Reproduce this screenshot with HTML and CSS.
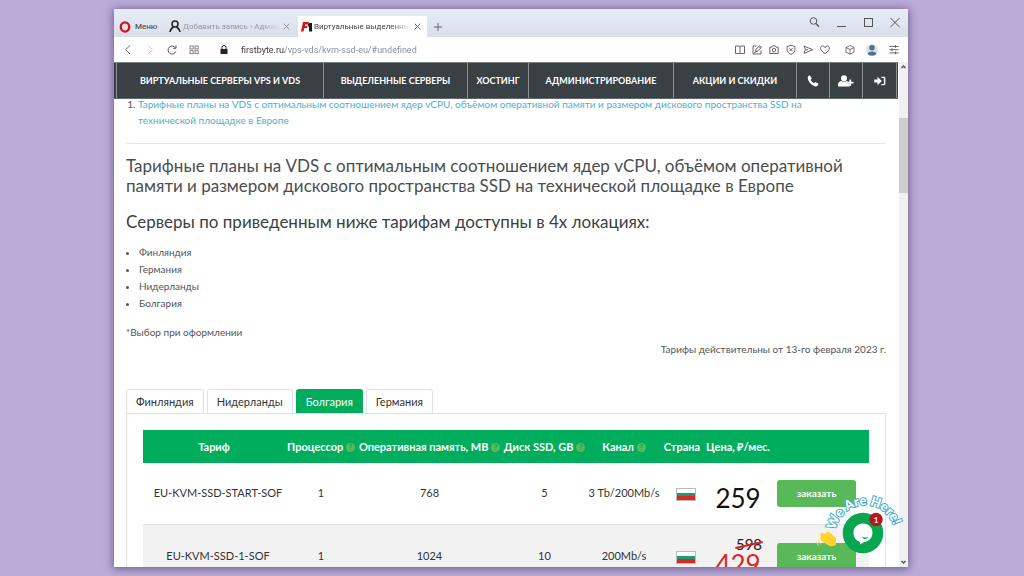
FILE: index.html
```html
<!DOCTYPE html>
<html lang="ru">
<head>
<meta charset="utf-8">
<title>Виртуальные выделенные серверы</title>
<link rel="stylesheet" href="styles.css">
</head>
<body>
<div class="window">
  <header class="tabstrip">
    <button class="menu" type="button">
      <svg class="ico-opera" viewBox="0 0 12 12"><ellipse cx="6" cy="6" rx="4.2" ry="4.6" fill="none" stroke="#d8131f" stroke-width="2.4"/></svg>
      Меню
    </button>
    <div class="btab">
      <svg class="ico-user" viewBox="0 0 12 13" fill="none" stroke="#222" stroke-width="1.5"><circle cx="6" cy="4" r="3"/><path d="M1 12c.3-2.500 1.800-4 3.500-5M11 12c-.3-2.500-1.800-4-3.500-5"/></svg>
      <span class="btab-title">Добавить запись ‹ Админи</span>
      <button class="x" type="button" aria-label="Закрыть вкладку"><svg viewBox="0 0 8 8" fill="none" stroke="#888f99"><path d="M.7.7l6.600 6.600M7.300.7L.7 7.300"/></svg></button>
    </div>
    <div class="btab active">
      <svg class="ico-fb" viewBox="0 0 12 10"><path d="M2 0h6L7.300 2.500H4.200l-.3 1.400h2.600L6 6.100H3.400L2.500 9.500H0z" fill="#d3141d"/><path d="M8.200 1H11v8.500H8V4.300l-1.300.5.3-2.300z" fill="#181818"/></svg>
      <span class="btab-title">Виртуальные выделенные</span>
      <button class="x" type="button" aria-label="Закрыть вкладку"><svg viewBox="0 0 8 8" fill="none" stroke="#555"><path d="M.7.7l6.600 6.600M7.300.7L.7 7.300"/></svg></button>
    </div>
    <button class="plus" type="button" aria-label="Новая вкладка"><svg viewBox="0 0 8 8" fill="none" stroke="#5c6470"><path d="M4 0v8M0 4h8"/></svg></button>
    <div class="wincontrols">
      <button type="button" aria-label="Поиск"><svg viewBox="0 0 12 12" fill="none" stroke="#555"><circle cx="5.500" cy="5" r="3.300"/><path d="M8 7.500l3 3.300" stroke-width="1.300"/></svg></button>
      <button type="button" aria-label="Свернуть"><svg viewBox="0 0 12 12" fill="none" stroke="#555"><path d="M2 10.500h9"/></svg></button>
      <button type="button" aria-label="Развернуть"><svg viewBox="0 0 12 12" fill="none" stroke="#555"><rect x="2.500" y="2.500" width="8" height="8"/></svg></button>
      <button type="button" aria-label="Закрыть"><svg viewBox="0 0 12 12" fill="none" stroke="#555"><path d="M1.500 2l9 9M10.500 2l-9 9"/></svg></button>
    </div>
  </header>

  <div class="toolbar">
    <button type="button" aria-label="Назад"><svg viewBox="0 0 12 12" fill="none" stroke="#666"><path d="M8 1.500L3.500 5.700 8 10"/></svg></button>
    <button type="button" aria-label="Вперёд"><svg viewBox="0 0 12 12" fill="none" stroke="#c4c4c4"><path d="M4 1.500l4.500 4.200L4 10"/></svg></button>
    <button type="button" aria-label="Обновить"><svg viewBox="0 0 12 12" fill="none" stroke="#555"><path d="M9.800 7.500A4 4 0 1 1 9.500 4M10 1.500V4.300H7.200"/></svg></button>
    <button type="button" aria-label="Экспресс-панель"><svg viewBox="0 0 12 12" fill="none" stroke="#666" stroke-width=".8"><rect x="2" y="2" width="3.200" height="3"/><rect x="7" y="2" width="3.200" height="3"/><rect x="2" y="6.700" width="3.200" height="3"/><rect x="7" y="6.700" width="3.200" height="3"/></svg></button>
    <svg class="lock" viewBox="0 0 8 9"><rect x=".5" y="4" width="7" height="5" fill="#222"/><path d="M2 4V2.500a2 2 0 0 1 4 0V4" fill="none" stroke="#222"/></svg>
    <input class="url" type="text" aria-label="Адрес" value="firstbyte.ru/vps-vds/kvm-ssd-eu/#undefined">
    <div class="tools">
      <button type="button" aria-label="Режим чтения"><svg viewBox="0 0 12 12" fill="none" stroke="#555" stroke-width=".9"><path d="M1.500 2h4l.5.500.5-.5h4v7.500h-4L6 10l-.5-.5h-4zM6 2.500V10"/></svg></button>
      <button type="button" aria-label="Заметка"><svg viewBox="0 0 12 12" fill="none" stroke="#555" stroke-width=".9"><path d="M5.500 2H2v8h8V6.500M4.500 7.500l.5-2.300L8.800 1.600l1.700 1.700-3.800 3.700zM3 8.700l3.200-1.500M8 2.500l1.600 1.700"/></svg></button>
      <button type="button" aria-label="Снимок"><svg viewBox="0 0 12 12" fill="none" stroke="#555" stroke-width=".9"><path d="M1.800 3.200h2L4.700 1.800h2.600l.9 1.400h2V9.500H1.800z"/><circle cx="6" cy="6.100" r="1.700"/></svg></button>
      <button type="button" aria-label="Блокировка рекламы"><svg viewBox="0 0 12 12" fill="none" stroke="#555" stroke-width=".9"><path d="M6 1.300l3.900 1.200v3.700c0 2-1.900 3.200-3.900 4.200-2-1-3.900-2.200-3.900-4.200V2.500zM4.400 4.100l3.200 3.200M7.600 4.100L4.400 7.300"/></svg></button>
      <button type="button" aria-label="Мой поток"><svg viewBox="0 0 12 12" fill="none" stroke="#555" stroke-width=".9"><path d="M2 2l8.700 3.700L2 9.400l1.300-3.700zM3.300 5.700H6"/></svg></button>
      <button type="button" aria-label="Закладки"><svg viewBox="0 0 12 12" fill="none" stroke="#555" stroke-width=".9"><path d="M6 9.700C3 7.500 1.600 6 1.600 4.200 1.600 1.500 5 1.200 6 3.600c1-2.400 4.400-2.100 4.400.6C10.400 6 9 7.500 6 9.700z"/></svg></button>
      <button class="gap" type="button" aria-label="Криптокошелёк"><svg viewBox="0 0 12 12" fill="none" stroke="#555" stroke-width=".8"><path d="M6 1.500l4 2v4.700l-4 2-4-2V3.500zM2 3.500l4 2 4-2M6 5.500v4.700"/></svg></button>
      <button class="gap" type="button" aria-label="Профиль"><svg viewBox="0 0 12 12"><circle cx="6" cy="6" r="6" fill="#d9e3ee"/><circle cx="6" cy="3.700" r="2.700" fill="#54708c"/><path d="M1.500 9.500C3 6.700 9 6.700 10.500 9.500 9 12.400 3 12.400 1.500 9.500z" fill="#54708c"/></svg></button>
      <button class="gap" type="button" aria-label="Настройки"><svg viewBox="0 0 12 12" fill="none" stroke="#555" stroke-width=".9"><path d="M1.500 2.500h9M1.500 5.700h9M1.500 8.900h9M7.500 1.200v2.600M4 4.400V7M7.500 7.600v2.600"/></svg></button>
    </div>
  </div>

  <div class="viewport">
    <div class="page">
      <nav class="nav">
        <a href="#">ВИРТУАЛЬНЫЕ СЕРВЕРЫ VPS И VDS</a>
        <a href="#">ВЫДЕЛЕННЫЕ СЕРВЕРЫ</a>
        <a href="#">ХОСТИНГ</a>
        <a href="#">АДМИНИСТРИРОВАНИЕ</a>
        <a href="#">АКЦИИ И СКИДКИ</a>
        <a href="#" aria-label="Телефон"><svg viewBox="0 0 12 12" fill="#fff"><path d="M.8 2C1.300 1 2 .7 3 .6l1.800 3-1.200 1.200c.6 1.500 1.900 2.800 3.500 3.500l1.300-1.200 3 1.700c0 1.200-.6 2.200-2.200 2.600C5.300 11.500.2 6.300.8 2z"/></svg></a>
        <a href="#" aria-label="Регистрация"><svg class="wide" viewBox="0 0 16 12" fill="#fff"><circle cx="6" cy="3.200" r="3"/><path d="M0 11.500V9.500C0 7 2 6.300 3.300 6c1.600 1 3.700 1 5.300 0l1 .4V8.500h2v3z"/><path d="M11.400 4.500h1.700v2.200h2.400v1.700h-2.400v2.400h-1.700V8.400H9.200V6.700h2.200z"/></svg></a>
        <a href="#" aria-label="Вход"><svg viewBox="0 0 13 12" fill="#fff"><path d="M.3 4.300h3.500V1.500L8.500 6l-4.700 4.500V7.700H.3z"/><path d="M8 1.500h2.800c1 0 1.500.6 1.500 1.500v6c0 .9-.5 1.500-1.500 1.500H8V9.200h2.700V2.800H8z"/></svg></a>
      </nav>
      <main class="content">
        <ol class="toc">
          <li><a href="#">Тарифные планы на VDS с оптимальным соотношением ядер vCPU, объёмом оперативной памяти и размером дискового пространства SSD на<br>технической площадке в Европе</a></li>
        </ol>
        <hr class="rule">
        <h2>Тарифные планы на VDS с оптимальным соотношением ядер vCPU, объёмом оперативной памяти и размером дискового пространства SSD на технической площадке в Европе</h2>
        <h3>Серверы по приведенным ниже тарифам доступны в 4х локациях:</h3>
        <ul class="places">
          <li>Финляндия</li>
          <li>Германия</li>
          <li>Нидерланды</li>
          <li>Болгария</li>
        </ul>
        <p class="note">*Выбор при оформлении</p>
        <p class="date">Тарифы действительны от 13-го февраля 2023 г.</p>
        <div class="tabs">
          <button type="button">Финляндия</button>
          <button type="button">Нидерланды</button>
          <button type="button" class="on">Болгария</button>
          <button type="button">Германия</button>
        </div>
        <div class="panel">
          <table class="plans">
            <colgroup><col class="c-plan"><col class="c-cpu"><col class="c-ram"><col class="c-disk"><col class="c-net"><col class="c-flag"><col class="c-price"><col></colgroup>
            <thead>
              <tr><th>Тариф</th><th>Процессор <i class="q">?</i></th><th>Оперативная память, МВ <i class="q">?</i></th><th>Диск SSD, GB <i class="q">?</i></th><th>Канал <i class="q">?</i></th><th>Страна</th><th>Цена, ₽/мес.</th><th></th></tr>
            </thead>
            <tbody>
              <tr><td class="plan">EU-KVM-SSD-START-SOF</td><td>1</td><td>768</td><td>5</td><td>3 Tb/200Mb/s</td><td><span class="flag"></span></td><td class="price"><b>259</b></td><td class="act"><button type="button">заказать</button></td></tr>
              <tr class="alt"><td class="plan">EU-KVM-SSD-1-SOF</td><td>1</td><td>1024</td><td>10</td><td>200Mb/s</td><td><span class="flag"></span></td><td class="price sale"><s>598</s><b>429</b></td><td class="act"><button type="button">заказать</button></td></tr>
            </tbody>
          </table>
        </div>
      </main>
    </div>
    <div class="scrollbar">
      <svg viewBox="0 0 9 9" fill="none" stroke="#555" stroke-width="1.500"><path d="M2.500 6l2-2 2 2"/></svg>
      <div class="thumb"></div>
      <svg viewBox="0 0 9 9" fill="none" stroke="#555" stroke-width="1.500"><path d="M2.500 3l2 2 2-2"/></svg>
    </div>
    <button class="chat" type="button" aria-label="Открыть чат">
      <svg viewBox="0 0 90 76">
        <defs><path id="arc" d="M19.500 40A30 30 0 0 1 79 43"/></defs>
        <circle cx="47" cy="43" r="20.300" fill="#08a650"/>
        <path d="M47 33.500c5.500 0 9.500 4 9.500 9.300 0 5.200-3.700 8.700-8.200 9.200L44 54.500V52c-4-1.300-6.500-4.700-6.500-9.200 0-5.300 4-9.300 9.500-9.300z" fill="#fff"/>
        <path d="M46 46.500c2 1.300 4.500 1.300 6 0-.3 3.300-5.300 3.300-6 0z" fill="#08a650"/>
        <text class="arctext"><textPath href="#arc">We Are Here!</textPath></text>
        <circle cx="60" cy="29.500" r="6.700" fill="#b9151b"/>
        <text x="60" y="32.500" class="badge">1</text>
        <path d="M5 42.500l4 1.500 1.800-2.500 3.200 1 6 5.500v6.500c-2 2.500-6 1.800-8 .4L5.500 51l-1.500-2.500 1-1-1-2.500z" fill="#ffd32e"/>
        <path d="M2.500 50c.2 2 1 3.300 2.700 4.500M.5 51.500c.4 2 1.300 3.400 2.600 4.500" fill="none" stroke="#ffd97a"/>
      </svg>
    </button>
  </div>
</div>
</body>
</html>
```
FILE: styles.css
```css
* { box-sizing: border-box; }
body {
  margin: 0;
  height: 100vh;
  padding: 9px 116px 9px 114px;
  background: #baabd8;
  font-family: Lato, "Open Sans", sans-serif;
  font-size: 10px;
  line-height: 17px;
  color: #505557;
  overflow: hidden;
}
button { font: inherit; color: inherit; border: 0; padding: 0; background: none; }
svg { display: block; }
h2, h3, p, ul, ol { margin: 0; padding: 0; font-weight: 400; }

.window {
  height: 100%;
  display: flex;
  flex-direction: column;
  background: #fff;
  box-shadow: 0 1px 8px 1px rgba(50, 30, 90, .55);
}

/* browser chrome */
.tabstrip {
  flex: none;
  height: 28px;
  display: flex;
  align-items: flex-end;
  background: linear-gradient(#e7edf6, #d9dfe9);
  font: 8px/12px Roboto, sans-serif;
  color: #333;
}
.menu { display: flex; align-items: center; gap: 4px; height: 21px; padding-left: 5px; width: 52px; white-space: nowrap; }
.ico-opera { width: 12px; height: 12px; }
.btab { display: flex; align-items: center; height: 21px; width: 132px; padding: 0 8px 0 3px; color: #8d98a8; }
.btab.active { background: #fff; color: #444; width: 129px; padding-right: 6px; }
.ico-user { width: 12px; height: 13px; margin-right: 2px; flex: none; }
.ico-fb { width: 12px; height: 10px; margin-right: 1px; flex: none; }
.btab-title {
  flex: 1;
  min-width: 0;
  overflow: hidden;
  white-space: nowrap;
  -webkit-mask-image: linear-gradient(90deg, #000 80%, transparent);
  mask-image: linear-gradient(90deg, #000 80%, transparent);
}
.x { margin-left: 3px; }
.x svg { width: 7px; height: 7px; }
.plus { height: 21px; padding-left: 7px; }
.plus svg { width: 8px; height: 8px; }
.wincontrols { margin-left: auto; align-self: flex-start; display: flex; gap: 15px; padding: 7px 7px 0 0; }
.wincontrols svg { width: 12px; height: 12px; }

.toolbar { flex: none; height: 25px; display: flex; align-items: center; gap: 10px; padding: 0 8px; }
.toolbar button svg { width: 12px; height: 12px; }
.lock { width: 8px; height: 9px; margin: 0 3px 0 10px; }
.url {
  flex: 1;
  min-width: 0;
  border: 0;
  padding: 0;
  outline: 0;
  font: 9px/16px Roboto, sans-serif;
  color: transparent;
  background: linear-gradient(90deg, #333 44px, #7c8b9c 44px);
  -webkit-background-clip: text;
  background-clip: text;
}
.tools { display: flex; gap: 5px; }
.tools .gap { margin-left: 5px; }
.tools .gap:nth-last-child(3) { margin-left: 8px; }

/* scrolled page */
.viewport { flex: 1; min-height: 0; display: flex; position: relative; }
.page { flex: 1; min-width: 0; overflow: hidden; }
.nav {
  position: relative;
  z-index: 1;
  height: 37px;
  margin-right: 1px;
  padding: 0 1px 0 2px;
  display: grid;
  grid-template-columns: 208fr 144fr 61fr 145fr 123fr 33fr 33fr 34fr;
  background: #3a4145;
  border-top: 1px solid #798083;
  border-bottom: 1px solid #61686b;
}
.nav a {
  display: flex;
  align-items: center;
  justify-content: center;
  border-right: 1px solid #8b9092;
  color: #fff;
  font-weight: 700;
  font-size: 9px;
  text-decoration: none;
  white-space: nowrap;
}
.nav a:first-child { border-left: 1px solid #8b9092; }
.nav svg { width: 12px; height: 12px; }
.nav .wide { width: 16px; }

.content { padding: 0 13px 0 12px; margin-top: -3px; }
.toc { padding-left: 12px; line-height: 16px; }
.toc a { color: #4fafca; text-decoration: none; }
.rule { margin: 15px 0 12px; border: 0; border-top: 1px solid #e6e6e6; }
h2 { font-size: 17px; line-height: 20px; color: #4a4e50; }
h3 { font-size: 17px; line-height: 20px; margin-top: 16px; color: #3c4042; }
.places { margin-top: 12px; padding-left: 13px; }
.note { margin-top: 12px; }
.date { text-align: right; }

.tabs { display: flex; gap: 3px; margin-top: 31px; color: #333; font-size: 11px; }
.tabs button { height: 24px; padding: 0 9px; border: 1px solid #e2e2e2; border-bottom: 0; border-radius: 3px 3px 0 0; background: #fff; }
.tabs .on { background: #00ad5d; border-color: #00ad5d; color: #fff; }
.panel { border: 1px solid #e2e2e2; padding: 16px; }

.plans { width: 100%; table-layout: fixed; border-collapse: collapse; color: #333; font-size: 11px; line-height: 16px; text-align: center; white-space: nowrap; }
.plans th, .plans td { padding: 0; }
.plans th { height: 33px; background: #00ad5d; color: #fff; font-weight: 700; }
.plans td { height: 61px; border-bottom: 1px solid #e2e2e2; }
.plans td.plan { padding-left: 8px; }
.plans .alt { background: #f2f2f2; }
.plans .alt td { height: 64px; }
.c-plan { width: 142px; }
.c-cpu { width: 72px; }
.c-ram { width: 145px; }
.c-disk { width: 85px; }
.c-net { width: 74px; }
.c-flag { width: 42px; }
.c-price { width: 70px; }
.q {
  display: inline-block;
  width: 9px;
  height: 9px;
  border-radius: 50%;
  background: #5cb85c;
  color: #00ad5d;
  font-size: 8px;
  line-height: 9px;
  font-style: normal;
  vertical-align: 1px;
}
.flag {
  display: block;
  width: 20px;
  height: 13px;
  margin: 2px auto 0 15px;
  border: 1px solid #bbb;
  background: linear-gradient(#fff 33%, #1b9a78 33% 66%, #d62b20 66%);
}
.price b { display: block; font-weight: 400; font-size: 26px; line-height: 28px; color: #111; padding-top: 9px; }
.price s { position: relative; display: block; margin-left: 22px; font-size: 15px; line-height: 16px; color: #222; text-decoration: none; }
.price s::after { content: ""; position: absolute; left: 10px; right: 10px; top: 8px; height: 2px; background: #e0201f; transform: rotate(-12deg); }
.plans .sale b { color: #df2424; padding: 0; line-height: 24px; }
.plans .act { text-align: left; }
.act button { width: 79px; height: 27px; margin-left: 4px; border-radius: 3px; background: #57b957; color: #fff; font-size: 10px; font-weight: 700; text-align: center; }

.scrollbar { flex: none; width: 9px; display: flex; flex-direction: column; background: #f0f0f0; }
.scrollbar svg { width: 9px; height: 9px; }
.thumb { height: 75px; margin: 47px 0 auto; background: #cdcdcd; }

.chat { position: absolute; right: 2px; bottom: 1px; }
.chat svg { width: 90px; height: 76px; }
.badge { font: 700 8px Lato, sans-serif; fill: #fff; text-anchor: middle; }
.arctext { font: 900 13px Lato, sans-serif; fill: #fff; stroke: #3fa9cb; stroke-width: 2px; paint-order: stroke; }
```
